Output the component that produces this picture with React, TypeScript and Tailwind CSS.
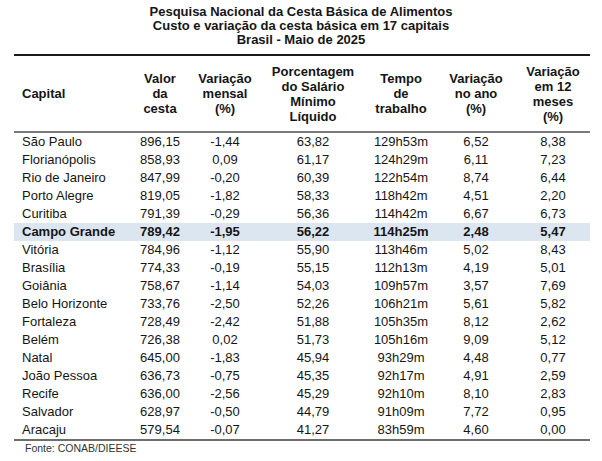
const rows: [string, string, string, string, string, string, string][] = [
  ["São Paulo", "896,15", "-1,44", "63,82", "129h53m", "6,52", "8,38"],
  ["Florianópolis", "858,93", "0,09", "61,17", "124h29m", "6,11", "7,23"],
  ["Rio de Janeiro", "847,99", "-0,20", "60,39", "122h54m", "8,74", "6,44"],
  ["Porto Alegre", "819,05", "-1,82", "58,33", "118h42m", "4,51", "2,20"],
  ["Curitiba", "791,39", "-0,29", "56,36", "114h42m", "6,67", "6,73"],
  ["Campo Grande", "789,42", "-1,95", "56,22", "114h25m", "2,48", "5,47"],
  ["Vitória", "784,96", "-1,12", "55,90", "113h46m", "5,02", "8,43"],
  ["Brasília", "774,33", "-0,19", "55,15", "112h13m", "4,19", "5,01"],
  ["Goiânia", "758,67", "-1,14", "54,03", "109h57m", "3,57", "7,69"],
  ["Belo Horizonte", "733,76", "-2,50", "52,26", "106h21m", "5,61", "5,82"],
  ["Fortaleza", "728,49", "-2,42", "51,88", "105h35m", "8,12", "2,62"],
  ["Belém", "726,38", "0,02", "51,73", "105h16m", "9,09", "5,12"],
  ["Natal", "645,00", "-1,83", "45,94", "93h29m", "4,48", "0,77"],
  ["João Pessoa", "636,73", "-0,75", "45,35", "92h17m", "4,91", "2,59"],
  ["Recife", "636,00", "-2,56", "45,29", "92h10m", "8,10", "2,83"],
  ["Salvador", "628,97", "-0,50", "44,79", "91h09m", "7,72", "0,95"],
  ["Aracaju", "579,54", "-0,07", "41,27", "83h59m", "4,60", "0,00"],
];

const cols = "grid grid-cols-[116px_60px_70px_106px_70px_80px_74px]";

const headers: string[][] = [
  ["Valor", "da", "cesta"],
  ["Variação", "mensal", "(%)"],
  ["Porcentagem", "do Salário", "Mínimo", "Líquido"],
  ["Tempo", "de", "trabalho"],
  ["Variação", "no ano", "(%)"],
  ["Variação", "em 12", "meses", "(%)"],
];

export default function App() {
  return (
    <div className="w-[602px] h-[461px] bg-white text-[#151515] font-['Liberation_Sans',Arial,sans-serif] overflow-hidden">
      {/* Title */}
      <div className="pt-[5px] text-center text-[13px] leading-[14px] font-bold">
        <p>Pesquisa Nacional da Cesta Básica de Alimentos</p>
        <p>Custo e variação da cesta básica em 17 capitais</p>
        <p>Brasil - Maio de 2025</p>
      </div>

      <div className="mx-[14px] mt-[7px] w-[576px]">
        <div className="h-[2px] bg-[#1a1a1a]" />

        {/* Header */}
        <div className={`${cols} h-[75px] items-center text-[13px] leading-[15px] font-bold`}>
          <div className="pl-[8px]">Capital</div>
          {headers.map((h, i) => (
            <div key={i} className="text-center">
              {h.map((l) => (
                <p key={l}>{l}</p>
              ))}
            </div>
          ))}
        </div>
        <div className="h-[2px] bg-[#7a7a7a]" />

        {/* Body */}
        {rows.map((r) => {
          const hl = r[0] === "Campo Grande";
          return (
            <div
              key={r[0]}
              className={`${cols} h-[18px] items-center text-[13px] leading-[18px] ${hl ? "bg-[#dce6f1] font-bold" : ""}`}
            >
              <div className="pl-[8px] whitespace-nowrap">{r[0]}</div>
              {r.slice(1).map((v, i) => (
                <div key={i} className="text-center">
                  {v}
                </div>
              ))}
            </div>
          );
        })}
        <div className="h-[2px] bg-[#6e6e6e]" />
        <p className="pl-[11px] text-[10.5px] leading-[14px] text-[#333]">Fonte: CONAB/DIEESE</p>
      </div>
    </div>
  );
}
